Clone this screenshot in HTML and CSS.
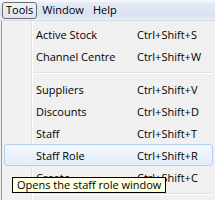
FILE: index.html
```html
<!DOCTYPE html>
<html>
<head>
<meta charset="utf-8">
<link rel="stylesheet" href="styles.css">
</head>
<body>
<div class="screen">
  <div class="menubar">
    <span class="mb-item active">Tools</span>
    <span class="mb-item">Window</span>
    <span class="mb-item">Help</span>
  </div>
  <div class="menu">
    <div class="row"><span class="label">Active Stock</span><span class="key">Ctrl+Shift+S</span></div>
    <div class="row"><span class="label">Channel Centre</span><span class="key">Ctrl+Shift+W</span></div>
    <div class="sep"></div>
    <div class="row"><span class="label">Suppliers</span><span class="key">Ctrl+Shift+V</span></div>
    <div class="row"><span class="label">Discounts</span><span class="key">Ctrl+Shift+D</span></div>
    <div class="row"><span class="label">Staff</span><span class="key">Ctrl+Shift+T</span></div>
    <div class="row hover"><span class="label">Staff Role</span><span class="key">Ctrl+Shift+R</span></div>
    <div class="row"><span class="label">Create</span><span class="key">Ctrl+Shift+C</span></div>
    <div class="sep"></div>
  </div>
  <div class="tooltip">Opens the staff role window</div>
</div>
</body>
</html>
```
FILE: styles.css
```css
html, body {
  margin: 0;
  padding: 0;
  background: #f0f0f0;
}
.screen {
  position: relative;
  width: 215px;
  height: 200px;
  overflow: hidden;
  font-family: "Open Sans", "DejaVu Sans", sans-serif;
  font-size: 11px;
  color: #000;
}
.menubar {
  height: 20px;
  display: flex;
  align-items: center;
  padding-left: 2px;
  background: linear-gradient(#f7f9fd 0, #e4eaf6 20%, #d9e2f3 70%, #e7ecf7 100%);
  border-bottom: 1px solid #d8dce4;
}
.mb-item {
  height: 15px;
  line-height: 14px;
  padding: 0 3px 0 3px;
  margin-right: 1px;
  border: 1px solid transparent;
  border-radius: 3px;
}
.mb-item.active {
  border-color: #6e6e6e;
  background: linear-gradient(#eef1f7, #dfe5f0);
}
.menu {
  margin-left: 1px;
  width: 212px;
  height: 180px;
  border-left: 1px solid #979797;
  padding-top: 2px;
  background: linear-gradient(to right, #f1f1f1 0, #f1f1f1 29px, #e2e3e3 29px, #e2e3e3 30px, #ffffff 30px, #ffffff 31px, #f0f0f0 31px);
}
.row {
  height: 22px;
  display: flex;
  align-items: center;
  margin: 0 1px 0 2px;
  padding-left: 31px;
  border: 1px solid transparent;
  box-sizing: border-box;
  border-radius: 3px;
}
.row.hover {
  border-color: #b5cff0;
  background: linear-gradient(#f3f7fd, #e3ecf9);
}
.label {
  width: 101px;
}
.sep {
  height: 11px;
  margin-left: 31px;
  margin-right: 2px;
  background: linear-gradient(transparent 5px, #e0e0e0 5px, #e0e0e0 6px, #ffffff 6px, #ffffff 7px, transparent 7px);
}
.tooltip {
  position: absolute;
  left: 12px;
  top: 177px;
  height: 14px;
  line-height: 14px;
  padding: 0 4px;
  background: #ffffe1;
  border: 1px solid #000;
  white-space: nowrap;
}
```
